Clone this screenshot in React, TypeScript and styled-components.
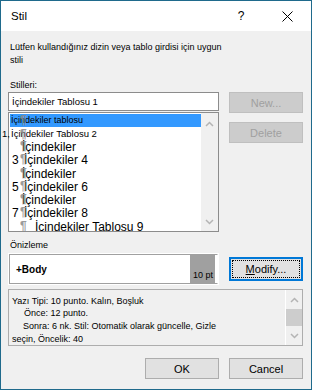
import React from "react";
import styled, { createGlobalStyle } from "styled-components";

const GlobalStyle = createGlobalStyle`
  html, body {
    margin: 0;
    padding: 0;
    background: #ffffff;
  }
  body {
    font-family: "Liberation Sans", Arial, sans-serif;
    color: #000;
  }
  * {
    box-sizing: border-box;
  }
`;

const Window = styled.div`
  width: 312px;
  height: 390px;
  border: 1px solid #1f6a8c;
  background: #f0f0f0;
  display: flex;
  flex-direction: column;
  overflow: hidden;
`;

const TitleBar = styled.div`
  height: 30px;
  flex-shrink: 0;
  background: #ffffff;
  display: flex;
  align-items: center;
  padding: 0 1px 0 10px;
`;

const Title = styled.span`
  flex: 1;
  font-size: 11.5px;
`;

const CaptionButton = styled.span`
  width: 46px;
  height: 30px;
  display: flex;
  align-items: center;
  justify-content: center;
  font-size: 12px;
`;

const Body = styled.div`
  flex: 1;
  display: flex;
  flex-direction: column;
  padding: 10px 8px 0 7px;
`;

const Intro = styled.div`
  font-size: 9px;
  line-height: 13px;
  margin-left: 2px;
`;

const TopGrid = styled.div`
  margin-top: 12px;
  display: grid;
  grid-template-columns: 211px 74px;
  column-gap: 10px;
`;

const Column = styled.div`
  display: flex;
  flex-direction: column;
`;

const SideColumn = styled(Column)`
  padding-top: 13px;
  gap: 9px;
`;

const Label = styled.div`
  font-size: 9px;
  line-height: 13px;
  margin-left: 2px;
`;

const TextInput = styled.div`
  height: 19px;
  border: 1px solid #8c8c8c;
  background: #ffffff;
  font-size: 9.5px;
  line-height: 17px;
  padding-left: 3px;
`;

const ListBox = styled.div`
  margin-top: 1px;
  height: 120px;
  border: 1px solid #8c8c8c;
  background: #ffffff;
  display: flex;
`;

const ListContent = styled.div`
  flex: 1;
  padding: 1px 0 0 1px;
  overflow-x: visible;
  overflow-y: clip;
`;

const Row = styled.div<{ $h: number; $size: number; $indent: number; $selected?: boolean }>`
  position: relative;
  height: ${(p) => p.$h}px;
  line-height: ${(p) => p.$h}px;
  font-size: ${(p) => p.$size}px;
  padding-left: ${(p) => p.$indent}px;
  background: ${(p) => (p.$selected ? "#3399ff" : "transparent")};
  white-space: nowrap;
`;

const Num = styled.span<{ $w: number; $shift?: number }>`
  display: inline-block;
  width: ${(p) => p.$w}px;
  margin-left: ${(p) => p.$shift ?? 0}px;
`;

const Pilcrow = styled.span<{ $top: number }>`
  position: absolute;
  left: 10px;
  top: ${(p) => p.$top}px;
  font-size: 12px;
  line-height: 12px;
  font-weight: bold;
  color: #8a8a8a;
  opacity: 0.85;
`;

const ScrollBar = styled.div`
  width: 17px;
  background: #f0f0f0;
  display: flex;
  flex-direction: column;
  justify-content: space-between;
`;

const Arrow = styled.div<{ $h: number }>`
  height: ${(p) => p.$h}px;
  display: flex;
  align-items: center;
  justify-content: center;
`;

const Thumb = styled.div`
  height: 17px;
  background: #cdcdcd;
`;

const Button = styled.button<{ $focused?: boolean }>`
  height: ${(p) => (p.$focused ? 24 : 21)}px;
  width: 74px;
  padding: 0;
  font-family: "Liberation Sans", Arial, sans-serif;
  font-size: 11px;
  color: #000;
  background: #e1e1e1;
  border: ${(p) => (p.$focused ? "2px solid #0078d7" : "1px solid #adadad")};
  outline: ${(p) => (p.$focused ? "1px dotted #000" : "none")};
  outline-offset: -4px;

  &:disabled {
    background: #cccccc;
    border-color: #bfbfbf;
    color: #a0a0a0;
  }
`;

const PreviewLabel = styled(Label)`
  margin-top: 7px;
  line-height: 12px;
`;

const PreviewRow = styled.div`
  margin-top: 2px;
  display: grid;
  grid-template-columns: 211px 74px;
  column-gap: 10px;
  align-items: center;
`;

const PreviewBox = styled.div`
  height: 32px;
  padding: 1px;
  background: #ffffff;
  display: flex;
`;

const PreviewFrame = styled.div`
  flex: 1;
  display: flex;
  border: 1px solid #a0a0a0;
  border-right-color: #ffffff;
`;

const PreviewText = styled.div`
  flex: 1;
  display: flex;
  align-items: center;
  padding-left: 6px;
  font-size: 10px;
  font-weight: bold;
`;

const SizeTag = styled.div`
  width: 25px;
  margin-right: 2px;
  background: #a0a0a0;
  display: flex;
  align-items: flex-end;
  padding: 0 0 3px 3px;
  font-size: 9px;
  white-space: nowrap;
`;

const DescBox = styled.div`
  margin-top: 4px;
  height: 57px;
  border: 1px solid #adadad;
  display: flex;
`;

const DescText = styled.div`
  flex: 1;
  padding: 4.6px 0 0 3px;
  font-size: 9px;
  line-height: 12.7px;
`;

const DescLine = styled.div<{ $indent?: number }>`
  padding-left: ${(p) => p.$indent ?? 0}px;
  white-space: nowrap;
`;

const DescScroll = styled.div`
  width: 17px;
  border-left: 1px solid #ffffff;
  background: #f0f0f0;
  display: flex;
  flex-direction: column;
`;

const Footer = styled.div`
  margin-top: 12px;
  display: flex;
  justify-content: flex-end;
  gap: 10px;
`;

function Chevron({ down }: { down?: boolean }) {
  return (
    <svg width="9" height="6" viewBox="0 0 9 6">
      <path
        d={down ? "M1 1 L4.5 4.5 L8 1" : "M1 5 L4.5 1.5 L8 5"}
        fill="none"
        stroke="#b4b4b4"
        strokeWidth="1.5"
      />
    </svg>
  );
}

function CloseIcon() {
  return (
    <svg width="11" height="11" viewBox="0 0 11 11">
      <path d="M0.5 0.5 L10.5 10.5 M10.5 0.5 L0.5 10.5" stroke="#000" strokeWidth="1" />
    </svg>
  );
}

const bigRows = [
  { num: "", text: "İçindekiler", indent: 12 },
  { num: "3", text: "İçindekiler 4", indent: 2 },
  { num: "", text: "İçindekiler", indent: 12 },
  { num: "5", text: "İçindekiler 6", indent: 2 },
  { num: "", text: "İçindekiler", indent: 12 },
  { num: "7", text: "İçindekiler 8", indent: 2 },
  { num: "", text: "İçindekiler Tablosu 9", indent: 25 },
];

export default function App() {
  return (
    <>
      <GlobalStyle />
      <Window>
        <TitleBar>
          <Title>Stil</Title>
          <CaptionButton>?</CaptionButton>
          <CaptionButton>
            <CloseIcon />
          </CaptionButton>
        </TitleBar>
        <Body>
          <Intro>
            Lütfen kullandığınız dizin veya tablo girdisi için uygun
            <br />
            stili
          </Intro>

          <TopGrid>
            <Column>
              <Label>Stilleri:</Label>
              <TextInput>İçindekiler Tablosu 1</TextInput>
              <ListBox>
                <ListContent>
                  <Row $h={13} $size={9} $indent={1} $selected>
                    İçindekiler tablosu
                    <Pilcrow $top={0}>¶</Pilcrow>
                  </Row>
                  <Row $h={14} $size={9.5} $indent={0}>
                    <Num $w={9} $shift={-8}>1,</Num>
                    İçindekiler Tablosu 2
                    <Pilcrow $top={1}>¶</Pilcrow>
                  </Row>
                  {bigRows.map((r, i) => (
                    <Row key={i} $h={13.3} $size={12} $indent={r.indent}>
                      {r.num && <Num $w={12}>{r.num}</Num>}
                      {r.text}
                      <Pilcrow $top={-1}>¶</Pilcrow>
                    </Row>
                  ))}
                </ListContent>
                <ScrollBar>
                  <Arrow $h={22}>
                    <Chevron />
                  </Arrow>
                  <Arrow $h={18}>
                    <Chevron down />
                  </Arrow>
                </ScrollBar>
              </ListBox>
            </Column>
            <SideColumn>
              <Button disabled>New...</Button>
              <Button disabled>Delete</Button>
            </SideColumn>
          </TopGrid>

          <PreviewLabel>Önizleme</PreviewLabel>
          <PreviewRow>
            <PreviewBox>
              <PreviewFrame>
                <PreviewText>+Body</PreviewText>
                <SizeTag>10 pt</SizeTag>
              </PreviewFrame>
            </PreviewBox>
            <Button $focused>
              <u>M</u>odify...
            </Button>
          </PreviewRow>

          <DescBox>
            <DescText>
              <DescLine>Yazı Tipi: 10 punto. Kalın, Boşluk</DescLine>
              <DescLine $indent={12}>Önce: 12 punto.</DescLine>
              <DescLine $indent={11}>Sonra: 6 nk. Stil: Otomatik olarak güncelle, Gizle</DescLine>
              <DescLine>seçin, Öncelik: 40</DescLine>
            </DescText>
            <DescScroll>
              <Arrow $h={19}>
                <Chevron />
              </Arrow>
              <Thumb />
              <Arrow $h={19}>
                <Chevron down />
              </Arrow>
            </DescScroll>
          </DescBox>

          <Footer>
            <Button>OK</Button>
            <Button>Cancel</Button>
          </Footer>
        </Body>
      </Window>
    </>
  );
}
